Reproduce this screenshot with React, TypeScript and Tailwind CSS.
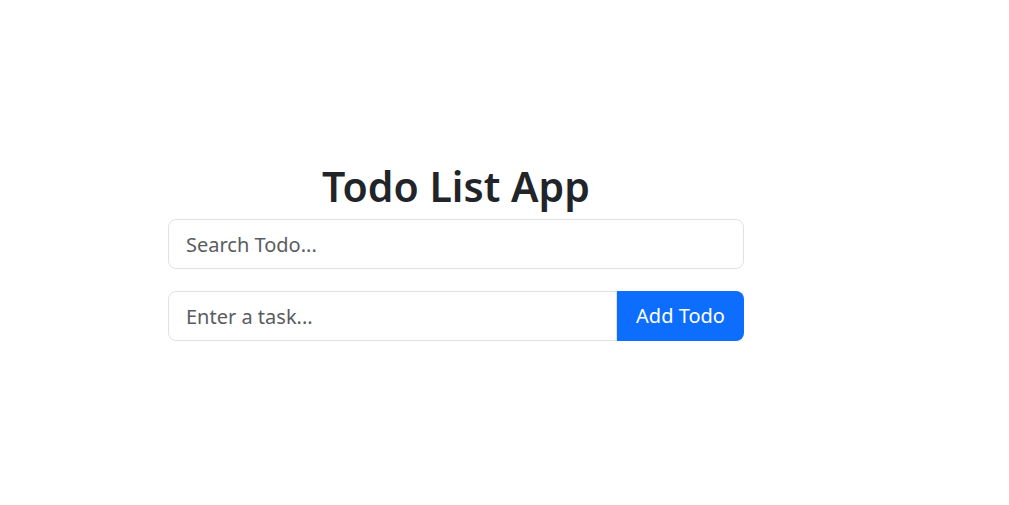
import { useState } from 'react'

export default function App() {
  const [search, setSearch] = useState('')
  const [task, setTask] = useState('')

  return (
    <div className="min-h-screen bg-white text-[#212529] font-['Noto_Sans',sans-serif]">
      <div className="ml-[168px] w-[576px] pt-[162px]">
        <h1 className="text-center text-[41px] font-semibold leading-[1.2] mb-[8px]">Todo List App</h1>

        <input
          type="text"
          value={search}
          onChange={(e) => setSearch(e.target.value)}
          placeholder="Search Todo..."
          className="block w-full h-[50px] px-[17px] text-[20px] border border-[#dee2e6] rounded-[8px] outline-none placeholder:text-[#595c5f] mb-[22px]"
        />

        <div className="flex h-[50px]">
          <input
            type="text"
            value={task}
            onChange={(e) => setTask(e.target.value)}
            placeholder="Enter a task..."
            className="flex-1 min-w-0 h-full px-[17px] text-[20px] border border-[#dee2e6] rounded-l-[8px] outline-none placeholder:text-[#595c5f]"
          />
          <button className="w-[127px] h-full bg-[#0d6efd] text-white text-[20px] rounded-r-[8px]">Add Todo</button>
        </div>
      </div>
    </div>
  )
}
